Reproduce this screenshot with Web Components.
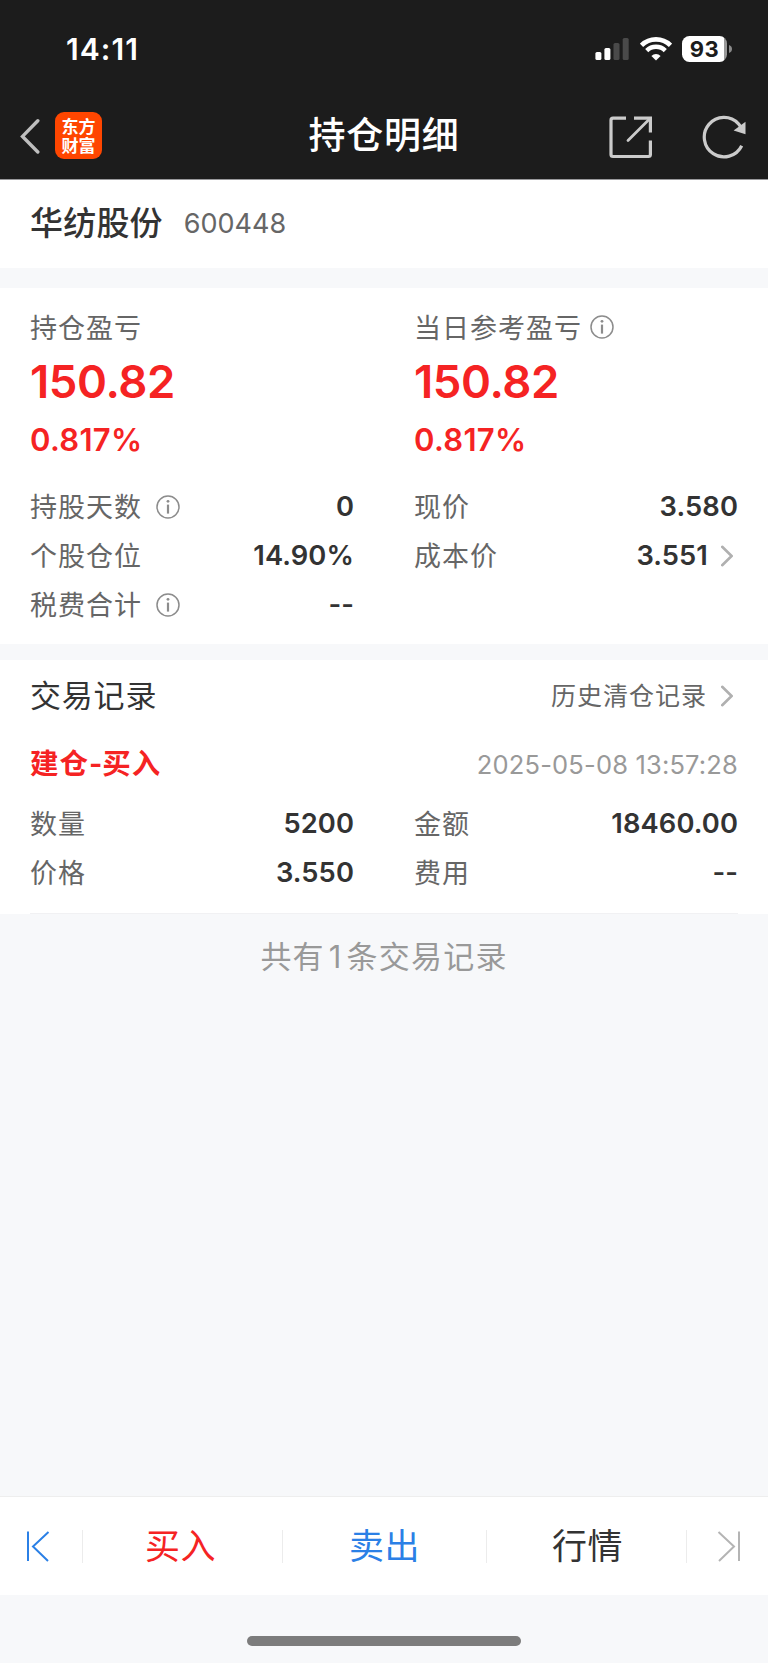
<!DOCTYPE html>
<html lang="zh-CN">
<head>
<meta charset="utf-8">
<title>持仓明细</title>
<style>
html,body{margin:0;padding:0;background:#f7f8fa}
body{width:768px;height:1663px;overflow:hidden;font-family:Inter,"Noto Sans CJK SC",sans-serif}
</style>
</head>
<body>
<holding-page></holding-page>
<script>
const CJK = 'font-family:"Noto Sans CJK SC",sans-serif;';
const NUM = 'font-family:Inter,"Noto Sans CJK SC",sans-serif;';
function define(name, css, html) {
  customElements.define(name, class extends HTMLElement {
    constructor() {
      super();
      this.attachShadow({mode: 'open'}).innerHTML =
        `<style>*{box-sizing:border-box}svg{display:block;flex:none}span{white-space:nowrap}${css}</style>${html}`;
    }
  });
}

define('info-icon', ':host{display:block;width:24px;height:24px;flex:none}', `
<svg width="24" height="24" viewBox="0 0 24 24" fill="none" stroke="#8c8c8c">
<circle cx="12" cy="12" r="11" stroke-width="1.5"/><path d="M12 9.6V18.6" stroke-width="2.2"/><circle cx="12" cy="6.3" r="1.4" fill="#8c8c8c" stroke="none"/></svg>`);

define('chevron-icon', ':host{display:block;width:12px;height:22px;flex:none}', `
<svg width="12" height="22" viewBox="0 0 12 22" fill="none" stroke="#b0b0b0" stroke-width="2.6" stroke-linecap="round"><path d="M1.2 1.8 10.6 11 1.2 20.2"/></svg>`);

define('status-bar', `
:host{display:flex;height:98px;align-items:center;padding:0 36px 0 66px;color:#fff}
.time{${NUM}font-size:30px;font-weight:600;letter-spacing:1.1px;line-height:30px}
.icons{display:flex;margin-left:auto;align-items:center}
.wifi{margin-left:10px}
.battery{margin-left:10px;width:45px;height:26px;border-radius:7.5px;background:linear-gradient(90deg,#fff 42px,#999 42px);display:flex;justify-content:center;align-items:center;color:#1c1c1c;${NUM}font-size:22px;font-weight:700;line-height:26px;letter-spacing:.6px}
.nub{margin-left:2px}`, `
<span class="time">14:11</span>
<div class="icons">
<svg width="35" height="24" viewBox="0 0 35 24" fill="#fff"><rect x=".4" y="15" width="6" height="8" rx="1.6"/><rect x="9.4" y="11" width="6" height="12" rx="1.6"/><rect x="18.5" y="6" width="6" height="17" rx="1.6" fill="#4a4a4a"/><rect x="27.7" y="1" width="6" height="22" rx="1.6" fill="#4a4a4a"/></svg>
<svg class="wifi" width="32" height="24" viewBox="0 0 32 24" fill="none" stroke="#fff"><path d="M1.5 8.3a20.6 20.6 0 0 1 29 0" stroke-width="4.6"/><path d="M6.7 13.6a13.2 13.2 0 0 1 18.6 0" stroke-width="4.4"/><path d="M11.4 18.9a6.5 6.5 0 0 1 9.2 0L16 23.5Z" fill="#fff" stroke="none"/></svg>
<div class="battery"><span>93</span></div>
<svg class="nub" width="3" height="8" viewBox="0 0 3 8"><path d="M0 0Q3 1.2 3 4T0 8Z" fill="#8a8a8a"/></svg>
</div>`);

define('app-logo', `
:host{display:flex;flex-direction:column;align-items:center;justify-content:center;width:47px;height:47px;border-radius:9px;background:#ff4600;color:#fff;${CJK}font-size:17px;font-weight:700;line-height:19px;padding-bottom:2px}`, `<span>东方<br>财富</span>`);

define('nav-bar', `
:host{display:grid;grid-template-columns:1fr auto 1fr;height:82px;align-items:center;color:#fff;border-bottom:1px solid #98989b;padding:0 21px}
.left{display:flex;align-items:center;gap:15px;margin:-6px 0 0 -1px}
.title{${CJK}font-size:37px;font-weight:500;letter-spacing:.7px;line-height:50px;margin-top:-12px}
.right{display:flex;justify-content:flex-end;gap:50px;margin:-4px 1px 0 0}`, `
<div class="left"><svg width="20" height="36" viewBox="0 0 20 36" fill="none" stroke="#bebebe" stroke-width="3.4" stroke-linecap="round"><path d="M17.8 2.8 2.5 18.4 17.8 34"/></svg><app-logo></app-logo></div>
<span class="title">持仓明细</span>
<div class="right">
<svg width="44" height="44" viewBox="0 0 44 44" fill="none" stroke="#cbcbcb" stroke-width="3.2"><path d="M18 3.2H5Q3 3.2 3 5.2V39.5Q3 41.5 5 41.5H40.4Q42.4 41.5 42.4 39.5V25.5"/><path d="M26 3.2H42.4V17.5"/><path d="M42 3.5 20 25.5" stroke-linecap="round" stroke-width="2.8"/></svg>
<svg width="44" height="44" viewBox="0 0 44 44" fill="none" stroke="#cbcbcb" stroke-width="3.2"><path d="M39.7 30.7A19.7 19.7 0 1 1 36.5 8.8L38.5 11.5"/><path d="M43.5 6.8V19.2L31.6 15.5Z" fill="#cbcbcb" stroke="none"/></svg>
</div>`);

define('stock-title', `
:host{display:flex;align-items:center;height:88px;background:#fff;padding:0 30px 2px;margin-bottom:20px}
.name{${CJK}font-size:33px;font-weight:500;letter-spacing:.2px;color:#333;line-height:40px;margin-top:-4px}
.code{${NUM}font-size:27px;color:#666;margin-left:21px;line-height:40px;margin-top:2px}`, `
<span class="name"><slot name="name"></slot></span><span class="code"><slot></slot></span>`);

define('profit-block', `
:host{display:block;color:#f52323;${NUM}font-weight:600}
.head{display:flex;align-items:center;gap:8px;${CJK}font-weight:400;font-size:27px;letter-spacing:1px;color:#666;height:40px;line-height:40px}
.head span{margin-top:-1px}
.big{display:block;font-size:45.5px;line-height:56px;margin-top:7px;letter-spacing:-.4px}
.pct{display:block;font-size:31px;line-height:40px;margin-top:10px;letter-spacing:.3px}`, `
<div class="head"><span><slot name="label"></slot></span><slot name="icon"></slot></div>
<span class="big"><slot></slot></span><span class="pct"><slot name="pct"></slot></span>`);

define('kv-row', `
:host{display:flex;align-items:center;height:49px}
.k{${CJK}font-weight:400;font-size:27px;letter-spacing:1px;color:#666;line-height:40px;margin-top:-2px}
::slotted(info-icon){margin-left:14px}
.v{${NUM}font-weight:600;font-size:27.3px;line-height:40px;color:#333;margin:1px 0 0 auto;letter-spacing:.1px}
::slotted(chevron-icon){margin:0 5px 0 13px}`, `
<span class="k"><slot name="k"></slot></span><slot name="info"></slot><span class="v"><slot></slot></span><slot name="more"></slot>`);

define('position-card', `
:host{display:grid;grid-template-columns:324px 324px;column-gap:60px;grid-template-rows:153px 22px repeat(3,49px);height:356px;background:#fff;padding:19px 30px 0;margin-bottom:16px}
profit-block{grid-row:1}
.c1{grid-column:1}.c2{grid-column:2}.r3{grid-row:3}.r4{grid-row:4}.r5{grid-row:5}`, `
<profit-block><span slot="label">持仓盈亏</span>150.82<span slot="pct">0.817%</span></profit-block>
<profit-block><span slot="label">当日参考盈亏</span><info-icon slot="icon"></info-icon>150.82<span slot="pct">0.817%</span></profit-block>
<kv-row class="c1 r3"><span slot="k">持股天数</span><info-icon slot="info"></info-icon>0</kv-row>
<kv-row class="c2 r3"><span slot="k">现价</span>3.580</kv-row>
<kv-row class="c1 r4"><span slot="k">个股仓位</span>14.90%</kv-row>
<kv-row class="c2 r4"><span slot="k">成本价</span>3.551<chevron-icon slot="more"></chevron-icon></kv-row>
<kv-row class="c1 r5"><span slot="k">税费合计</span><info-icon slot="info"></info-icon>--</kv-row>`);

define('trade-card', `
:host{display:block;height:254px;background:#fff;padding:11px 30px 0}
.head{display:flex;align-items:center;height:50px}
.head b{${CJK}font-weight:400;font-size:31px;letter-spacing:.8px;color:#333;line-height:50px;margin-top:-5px}
.head .more{${CJK}font-weight:400;font-size:25px;letter-spacing:1px;color:#666;line-height:50px;margin:-5px 14px 0 auto}
chevron-icon{margin-right:5px}
.sub{display:flex;align-items:center;height:50px;margin-top:18px}
.type{${CJK}font-weight:700;font-size:28.5px;letter-spacing:1px;color:#f52323;line-height:40px;margin-top:-3px}
.type i{font:700 28.5px/40px Inter,sans-serif;letter-spacing:0;margin:0}
.date{${NUM}font-size:25.5px;color:#999;margin-left:auto;line-height:40px;letter-spacing:.17px;margin-top:1px}
.rows{display:grid;grid-template-columns:324px 324px;column-gap:60px;margin-top:10px}
.line{height:1px;background:#f1f1f3;margin-top:16px}`, `
<div class="head"><b>交易记录</b><span class="more">历史清仓记录</span><chevron-icon></chevron-icon></div>
<div class="sub"><span class="type">建仓<i>-</i>买入</span><span class="date">2025-05-08 13:57:28</span></div>
<div class="rows">
<kv-row><span slot="k">数量</span>5200</kv-row><kv-row><span slot="k">金额</span>18460.00</kv-row>
<kv-row><span slot="k">价格</span>3.550</kv-row><kv-row><span slot="k">费用</span>--</kv-row></div>
<div class="line"></div>`);

define('record-count', `
:host{display:flex;justify-content:center;height:582px;padding-top:16px;${CJK}font-weight:400;font-size:31px;letter-spacing:1.2px;color:#999;line-height:50px}
i{font:400 31px/50px Inter,sans-serif;margin:0 4px}`, `<span>共有<i>1</i>条交易记录</span>`);

define('tab-bar', `
:host{display:grid;grid-template-columns:83px 200px 204px 200px 81px;height:99px;background:#fff;border-top:1px solid #eee;align-items:center}
div{height:33px;display:flex;align-items:center;justify-content:center;border-right:1px solid #ececec}
.first{padding-right:6px}
.last{border:0;padding-left:2px}
span{${CJK}font-weight:400;font-size:35px;letter-spacing:.4px;line-height:50px;margin-top:-5px}
.buy{color:#f52323;margin-left:-4px}.sell{color:#2b80e6}.quote{color:#333;margin-left:2px}`, `
<div class="first"><svg width="24" height="32" viewBox="0 0 24 32" fill="none" stroke="#2b80e6" stroke-width="2"><path d="M2 1.5V31M22.5 2 7 16.5 22 31"/></svg></div>
<div><span class="buy">买入</span></div><div><span class="sell">卖出</span></div><div><span class="quote">行情</span></div>
<div class="last"><svg width="24" height="32" viewBox="0 0 24 32" fill="none" stroke="#b4b4b4" stroke-width="2"><path d="M22 1.5V31M1.5 2 17 16.5 2 31"/></svg></div>`);

define('home-indicator', `
:host{display:flex;justify-content:center;height:68px;padding-top:41px}
div{width:274px;height:10px;border-radius:5px;background:#7c7c7c}`, `<div></div>`);

define('holding-page', `
:host{display:block;width:768px;height:1663px;background:#f7f8fa}
header{background:#1c1c1c;height:180px}`, `
<header><status-bar></status-bar><nav-bar></nav-bar></header>
<stock-title><span slot="name">华纺股份</span>600448</stock-title>
<position-card></position-card>
<trade-card></trade-card>
<record-count></record-count>
<tab-bar></tab-bar>
<home-indicator></home-indicator>`);
</script>
</body>
</html>
